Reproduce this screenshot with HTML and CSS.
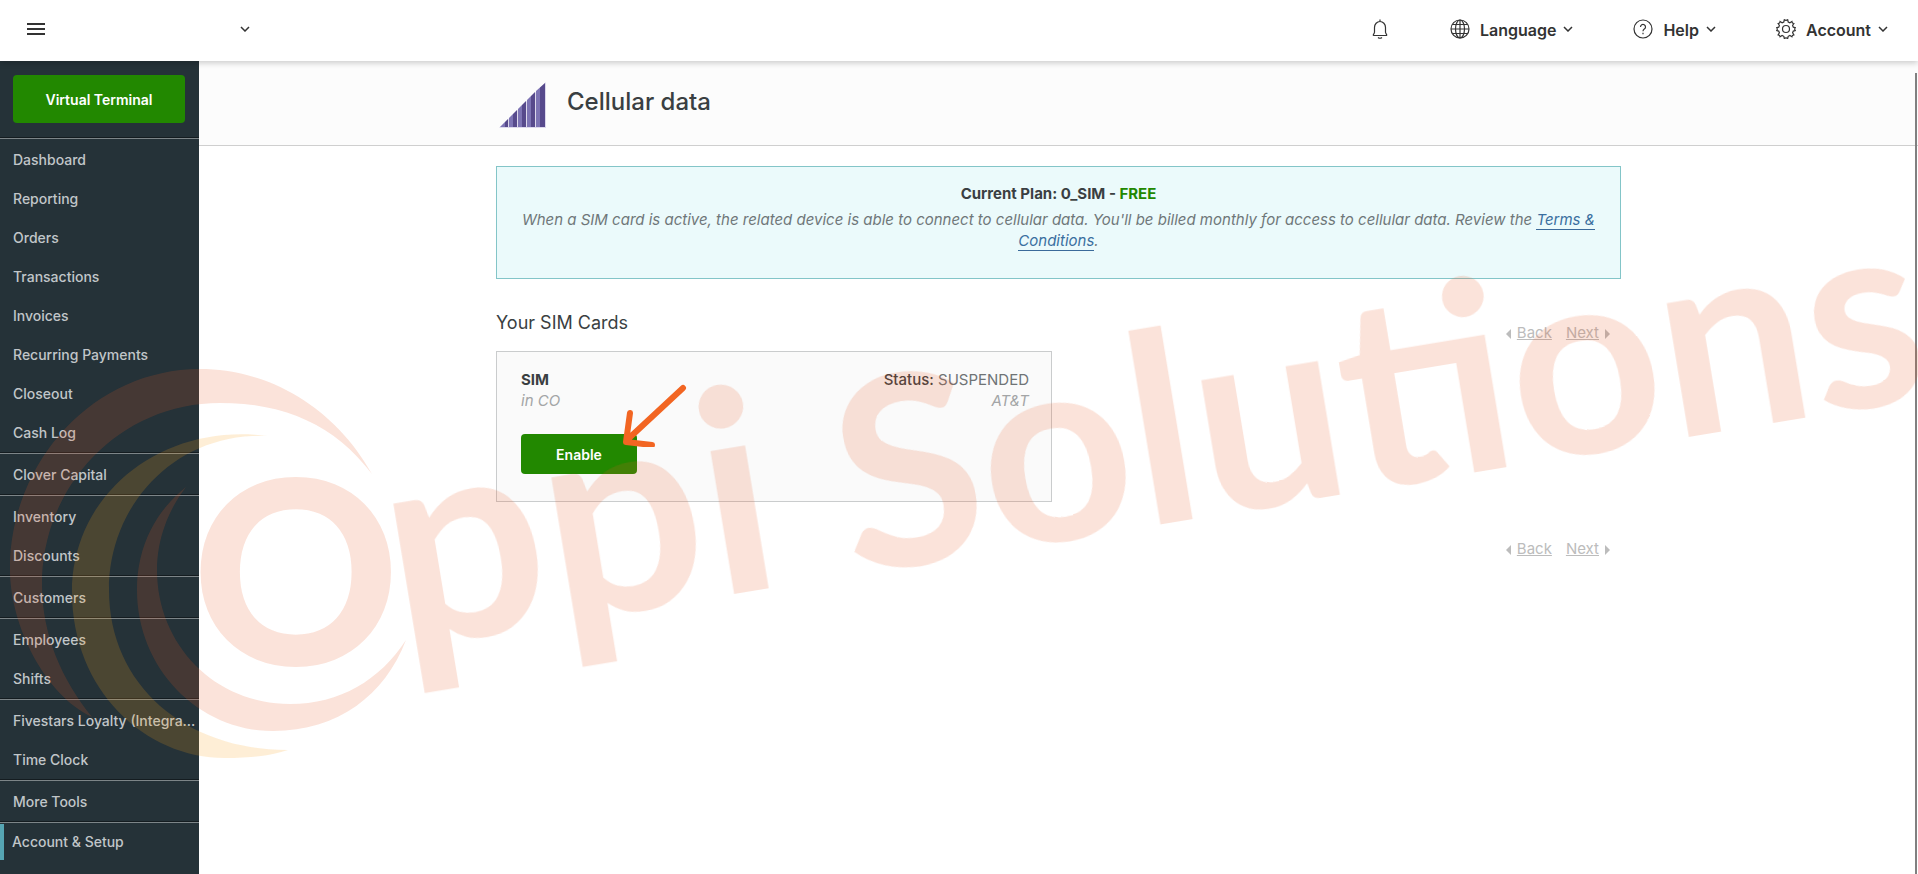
FILE: index.html
```html
<!DOCTYPE html>
<html lang="en">
<head>
    <meta charset="UTF-8">
    <meta name="viewport" content="width=device-width, initial-scale=1.0">
    <title>Cellular data</title>
    <link rel="stylesheet" href="styles.css">
</head>
<body>
    <header class="topbar">
        <button type="button" class="icon-button menu-button" aria-label="Menu">
            <svg width="18" height="14" viewBox="0 0 18 14" stroke="#333" stroke-width="2"><path d="M0 2h18M0 7h18M0 12h18"/></svg>
        </button>
        <button type="button" class="icon-button merchant-button" aria-label="Choose merchant">
            <svg class="chevron" viewBox="0 0 10 6"><path d="M1 1l4 4 4-4"/></svg>
        </button>
        <nav class="top-actions" aria-label="Account">
            <button type="button" class="icon-button bell-button" aria-label="Notifications">
                <svg class="top-icon" viewBox="0 0 20 20"><path d="M10 0.500v2M3 16.500h14M4.500 13.500V8.500a5.500 6 0 0 1 11 0v5M3 16.500l1.500-3M17 16.500l-1.500-3M8 18.500q2 1.500 4 0"/></svg>
            </button>
            <button type="button" class="top-link">
                <svg class="top-icon globe" viewBox="0 0 20 20"><circle cx="10" cy="10" r="9"/><ellipse cx="10" cy="10" rx="4.500" ry="9"/><path d="M10 1v18M1 10h18M2.500 5.500h15M2.500 14.500h15"/></svg>
                <span>Language</span>
                <svg class="chevron" viewBox="0 0 10 6"><path d="M1 1l4 4 4-4"/></svg>
            </button>
            <button type="button" class="top-link">
                <svg class="top-icon" viewBox="0 0 20 20"><circle cx="10" cy="10" r="9"/><path d="M7.500 8a2.500 2.500 0 1 1 3.800 2.100Q10 11 10 12.300M10 13.800v1.400"/></svg>
                <span>Help</span>
                <svg class="chevron" viewBox="0 0 10 6"><path d="M1 1l4 4 4-4"/></svg>
            </button>
            <button type="button" class="top-link">
                <svg class="top-icon" viewBox="0 0 20 20"><circle cx="10" cy="10" r="3.500"/><path d="M7.800 3L8.300.8q1.700 1.200 3.400 0l.5 2.200 1.700.8 2-1.200q.2 1.800 1.900 1.900l-1.200 2 .7 1.700 2 .5q-1.200 1.400 0 2.900l-2 .5-.7 1.700 1.200 2q-1.700.1-1.900 1.900l-2-1.200-1.700.8-.5 2.200q-1.700-1.200-3.400 0L7.800 17.300l-1.700-.8-2 1.200q-.2-1.800-1.900-1.900l1.200-2-.7-1.700-2-.5q1.200-1.500 0-2.900l2-.5.7-1.700-1.200-2q1.700-.1 1.900-1.900l2 1.200z"/></svg>
                <span>Account</span>
                <svg class="chevron" viewBox="0 0 10 6"><path d="M1 1l4 4 4-4"/></svg>
            </button>
        </nav>
    </header>

    <div class="layout">
        <aside class="sidebar">
            <div class="sidebar-top">
                <button type="button" class="green-button terminal-button">Virtual Terminal</button>
            </div>
            <nav aria-label="Main">
                <ul class="nav-group">
                    <li><a href="#">Dashboard</a></li>
                    <li><a href="#">Reporting</a></li>
                    <li><a href="#">Orders</a></li>
                    <li><a href="#">Transactions</a></li>
                    <li><a href="#">Invoices</a></li>
                    <li><a href="#">Recurring Payments</a></li>
                    <li><a href="#">Closeout</a></li>
                    <li><a href="#">Cash Log</a></li>
                </ul>
                <ul class="nav-group">
                    <li><a href="#">Clover Capital</a></li>
                </ul>
                <ul class="nav-group">
                    <li><a href="#">Inventory</a></li>
                    <li><a href="#">Discounts</a></li>
                </ul>
                <ul class="nav-group">
                    <li><a href="#">Customers</a></li>
                </ul>
                <ul class="nav-group">
                    <li><a href="#">Employees</a></li>
                    <li><a href="#">Shifts</a></li>
                </ul>
                <ul class="nav-group">
                    <li><a href="#">Fivestars Loyalty (Integra...</a></li>
                    <li><a href="#">Time Clock</a></li>
                </ul>
                <ul class="nav-group">
                    <li><a href="#">More Tools</a></li>
                </ul>
                <ul class="nav-group">
                    <li><a href="#" class="current">Account &amp; Setup</a></li>
                </ul>
            </nav>
        </aside>

        <main class="page">
            <div class="page-header">
                <div class="container page-title">
                    <svg width="50" height="48" viewBox="0 0 50 48">
                        <defs>
                            <linearGradient id="bar" x1="4" x2="13" y1="0" y2="0" gradientUnits="userSpaceOnUse" spreadMethod="repeat">
                                <stop offset="0.500" stop-color="#7d74b4"/>
                                <stop offset="0.500" stop-color="#574a8c"/>
                            </linearGradient>
                        </defs>
                        <path d="M3 47L50 1v46z" fill="#dcd8ec"/>
                        <path d="M4 46l8-8v8zM13 46v-9l8-8v17zM22 46V28l8-8v26zM31 46V19l8-8v35zM40 46V10l9-8v44z" fill="url(#bar)"/>
                    </svg>
                    <h1>Cellular data</h1>
                </div>
            </div>

            <div class="container">
                <section class="plan">
                    <p class="plan-name">Current Plan: 0_SIM - <span class="free">FREE</span></p>
                    <p class="plan-text">When a SIM card is active, the related device is able to connect to cellular data. You'll be billed monthly for access to cellular data. Review the <a href="#">Terms &amp; Conditions</a>.</p>
                </section>

                <div class="list-header">
                    <h2>Your SIM Cards</h2>
                    <nav class="pager" aria-label="Pages">
                        <span class="arrow-left"></span><a href="#">Back</a><a href="#">Next</a><span class="arrow-right"></span>
                    </nav>
                </div>

                <article class="sim-card">
                    <div class="sim-row">
                        <div>
                            <strong>SIM</strong>
                            <em>in CO</em>
                        </div>
                        <div class="sim-status">
                            <span><b>Status:</b> SUSPENDED</span>
                            <em>AT&amp;T</em>
                        </div>
                    </div>
                    <div class="sim-action">
                        <button type="button" class="green-button enable-button">Enable</button>
                        <svg class="pointer" width="66" height="64" viewBox="0 0 66 64"><path d="M61 5L5 57M8 30L4 59M4 59L30 62" /></svg>
                    </div>
                </article>

                <nav class="pager pager-bottom" aria-label="Pages">
                    <span class="arrow-left"></span><a href="#">Back</a><a href="#">Next</a><span class="arrow-right"></span>
                </nav>
            </div>
        </main>
    </div>

    <div class="scroll-thumb"></div>

    <svg class="watermark" viewBox="0 0 1918 874" aria-hidden="true">
        <g class="mark-red">
            <path d="M372 474C335 408 270 369 200 369C95 369 10 460 10 570C10 625 45 695 92 717C62 680 42 635 42 585C42 485 120 403 220 403C285 403 335 425 372 474z"/>
            <path d="M186 487C157 510 137 545 137 590C137 668 198 731 273 731C338 731 385 695 406 640C380 680 340 704 290 704C215 704 157 645 157 570C157 540 168 510 186 487z"/>
            <text class="mark-o" x="192" y="665">O</text>
            <g transform="rotate(-9.400 427 659)">
                <text class="mark-word mark-first" x="402" y="645">ppi</text>
                <text class="mark-word" x="860" y="646">Solutions</text>
            </g>
        </g>
        <path class="mark-yellow" d="M268 436C160 422 72 495 72 592C72 690 145 758 225 758C250 758 270 756 288 750C185 750 109 685 109 590C109 505 175 432 268 436z"/>
    </svg>
</body>
</html>
```

FILE: styles.css
```css
* {
    box-sizing: border-box;
}

body {
    margin: 0;
    min-height: 100vh;
    display: flex;
    flex-direction: column;
    position: relative;
    overflow-x: hidden;
    background-color: #fff;
    color: #3a3f42;
    font-family: Inter, "Liberation Sans", sans-serif;
    font-size: 15px;
    line-height: 21px;
}

h1,
h2,
p,
ul {
    margin: 0;
    padding: 0;
}

ul {
    list-style: none;
}

button {
    font-family: inherit;
    cursor: pointer;
}

/* top bar */
.topbar {
    display: flex;
    align-items: center;
    height: 61px;
    padding: 0 30px 3px 27px;
    background-color: #fff;
    box-shadow: 0 2px 6px rgba(0, 0, 0, 0.2);
    z-index: 1;
}

.icon-button,
.top-link {
    display: flex;
    align-items: center;
    padding: 0;
    border: none;
    background: none;
    color: #333;
}

.merchant-button {
    margin-left: 195px;
}

.chevron {
    width: 10px;
    height: 6px;
    fill: none;
    stroke: #333;
    stroke-width: 1.5;
}

.top-actions {
    display: flex;
    align-items: center;
    gap: 60px;
    margin-left: auto;
}

.top-link {
    font-size: 16px;
    font-weight: 600;
}

.top-link span {
    margin: 2px 7px 0 10px;
}

.top-icon {
    width: 20px;
    height: 20px;
    fill: none;
    stroke: #333;
    stroke-width: 1.2;
}

/* sidebar */
.layout {
    display: flex;
    flex: 1;
}

.sidebar {
    width: 199px;
    flex-shrink: 0;
    background-color: #253238;
}

.sidebar-top {
    padding: 14px 14px 14px 13px;
    border-bottom: 1px solid #141c20;
}

.green-button {
    border: none;
    border-radius: 4px;
    background-color: #228800;
    color: #fff;
    font-size: 14px;
    font-weight: 600;
}

.terminal-button {
    width: 100%;
    height: 48px;
}

.nav-group {
    padding-top: 1px;
    border-top: 1px solid #7d8588;
    border-bottom: 1px solid #141c20;
}

.nav-group:last-child {
    border-bottom: none;
}

.nav-group a {
    display: block;
    padding-left: 13px;
    color: #c1c6c9;
    font-size: 14px;
    font-weight: 500;
    line-height: 39px;
    text-decoration: none;
    white-space: nowrap;
}

.nav-group .current {
    padding-left: 8px;
    border-left: 4px solid #56a5b3;
    line-height: 36px;
}

/* page */
.page {
    flex: 1;
}

.container {
    max-width: 1125px;
    margin: 0 auto;
}

.page-header {
    height: 85px;
    background-color: #fcfcfc;
    border-bottom: 1px solid #cfcfcf;
}

.page-title {
    display: flex;
    align-items: center;
    gap: 21px;
    padding-top: 20px;
}

.page-title h1 {
    padding-bottom: 6px;
    font-size: 24px;
    font-weight: 500;
    line-height: 30px;
}

.plan {
    height: 113px;
    margin-top: 20px;
    padding: 16px 20px;
    background-color: #ebfafb;
    border: 1px solid #83c5c8;
    text-align: center;
}

.plan-name {
    margin-bottom: 5px;
    font-weight: 700;
}

.free {
    color: #228800;
}

.plan-text {
    color: #6f7779;
    font-style: italic;
}

.plan-text a {
    border-bottom: 1px solid #3a6a9a;
    color: #3a6f9f;
    text-decoration: none;
}

.list-header {
    display: flex;
    justify-content: space-between;
    height: 72px;
    padding-top: 33px;
}

.list-header h2 {
    font-size: 18px;
    font-weight: 400;
    line-height: 22px;
}

.pager {
    display: flex;
    justify-content: flex-end;
    align-items: center;
    height: 21px;
    margin-right: 11px;
    color: #bcbcbc;
}

.list-header .pager {
    margin-top: 10px;
}

.pager a {
    margin-left: 6px;
    color: inherit;
}

.pager a + a {
    margin: 0 6px 0 14px;
}

.arrow-left,
.arrow-right {
    margin-top: 3px;
    border: 5px solid transparent;
}

.arrow-left {
    border-left: none;
    border-right-color: #bcbcbc;
}

.arrow-right {
    border-right: none;
    border-left-color: #bcbcbc;
}

.sim-card {
    width: 556px;
    max-width: 100%;
    height: 151px;
    padding: 17px 22px 0 24px;
    background-color: #fafafa;
    border: 1px solid #cacccd;
}

.sim-row {
    display: flex;
    justify-content: space-between;
}

.sim-row em {
    display: block;
    color: #a3a5a6;
}

.sim-status {
    color: #6f7375;
    text-align: right;
}

.sim-status b {
    color: #3a3f42;
    font-weight: 500;
}

.sim-action {
    position: relative;
    margin-top: 23px;
}

.enable-button {
    width: 116px;
    height: 40px;
}

/* arrow drawn over the button */
.pointer {
    position: absolute;
    left: 101px;
    top: -51px;
    fill: none;
    stroke: #f26522;
    stroke-width: 6;
    stroke-linecap: round;
    stroke-linejoin: round;
}

.pager-bottom {
    margin-top: 36px;
}

.scroll-thumb {
    position: absolute;
    top: 73px;
    right: 1px;
    bottom: 0;
    width: 2px;
    background-color: #808080;
    z-index: 2;
}

/* watermark over the whole page */
.watermark {
    position: absolute;
    top: 0;
    left: 0;
    width: 100%;
    z-index: 3;
    pointer-events: none;
}

.mark-red {
    fill: #e85a24;
    opacity: 0.17;
}

.mark-yellow {
    fill: #fba21c;
    opacity: 0.18;
}

.mark-o {
    font-family: Lato, sans-serif;
    font-size: 256px;
    font-weight: 900;
}

.mark-word {
    font-family: Lato, sans-serif;
    font-size: 264px;
    font-weight: 700;
}

.mark-first {
    font-size: 282px;
}
```
